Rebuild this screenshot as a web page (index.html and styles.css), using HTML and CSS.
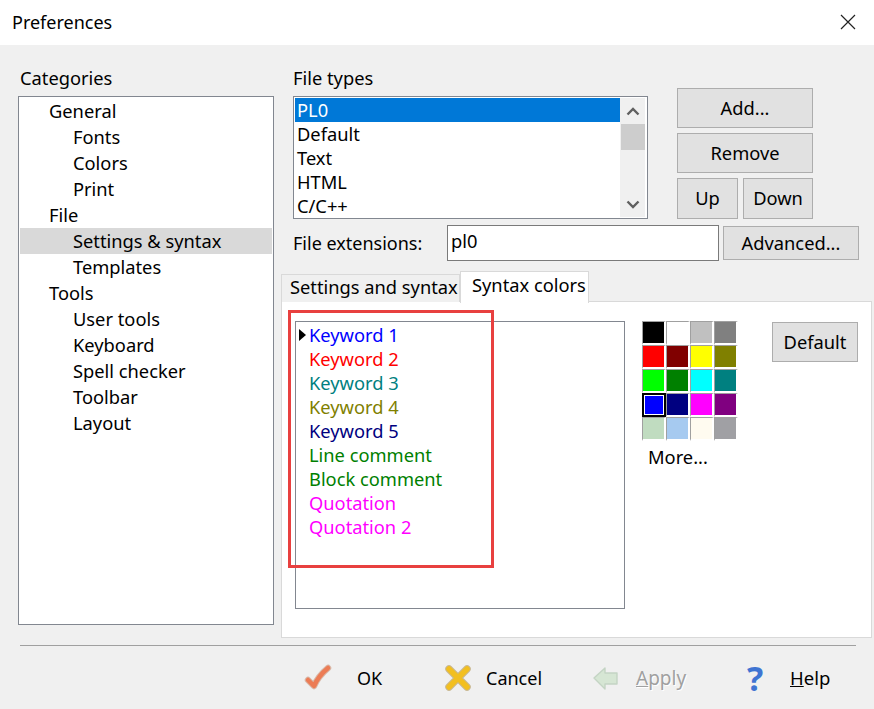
FILE: index.html
```html
<!DOCTYPE html>
<html lang="en">
<head>
    <meta charset="UTF-8">
    <meta name="viewport" content="width=device-width, initial-scale=1.0">
    <title>Preferences</title>
    <link rel="stylesheet" href="styles.css">
</head>
<body>
    <div class="titlebar">
        <span>Preferences</span>
        <svg class="close" width="16" height="16" viewBox="0 0 16 16"><path d="M1 1L15 15M15 1L1 15" stroke="#222" stroke-width="1.2" fill="none"/></svg>
    </div>
    <div class="main">
        <div class="categories">
            <div class="group-label">Categories</div>
            <ul class="tree">
                <li class="lvl1">General</li>
                <li class="lvl2">Fonts</li>
                <li class="lvl2">Colors</li>
                <li class="lvl2">Print</li>
                <li class="lvl1">File</li>
                <li class="lvl2 active">Settings &amp; syntax</li>
                <li class="lvl2">Templates</li>
                <li class="lvl1">Tools</li>
                <li class="lvl2">User tools</li>
                <li class="lvl2">Keyboard</li>
                <li class="lvl2">Spell checker</li>
                <li class="lvl2">Toolbar</li>
                <li class="lvl2">Layout</li>
            </ul>
        </div>
        <div class="settings">
            <div class="top">
                <div>
                    <div class="group-label types-label">File types</div>
                    <div class="filetypes">
                        <ul class="typelist">
                            <li class="selected">PL0</li>
                            <li>Default</li>
                            <li>Text</li>
                            <li>HTML</li>
                            <li>C/C++</li>
                        </ul>
                        <div class="scrollbar">
                            <svg width="14" height="10" viewBox="0 0 14 10"><path d="M1.5 8.5L7 3L12.5 8.5" stroke="#606060" stroke-width="2.4" fill="none"/></svg>
                            <div class="thumb"></div>
                            <svg class="down" width="14" height="10" viewBox="0 0 14 10"><path d="M1.5 1.5L7 7L12.5 1.5" stroke="#606060" stroke-width="2.4" fill="none"/></svg>
                        </div>
                    </div>
                </div>
                <div class="side-buttons">
                    <button class="btn tall">Add...</button>
                    <button class="btn tall">Remove</button>
                    <div class="updown">
                        <button class="btn up">Up</button>
                        <button class="btn down-btn">Down</button>
                    </div>
                </div>
            </div>
            <div class="extensions">
                <label class="ext-label">File extensions:</label>
                <div class="ext-input">pl0</div>
                <button class="btn advanced">Advanced...</button>
            </div>
            <div class="tabs">
                <div class="tab">Settings and syntax</div>
                <div class="tab current">Syntax colors</div>
            </div>
            <div class="panel">
                <ul class="syntax">
                    <li class="c-blue marked">Keyword 1</li>
                    <li class="c-red">Keyword 2</li>
                    <li class="c-teal">Keyword 3</li>
                    <li class="c-olive">Keyword 4</li>
                    <li class="c-navy">Keyword 5</li>
                    <li class="c-green">Line comment</li>
                    <li class="c-green">Block comment</li>
                    <li class="c-magenta">Quotation</li>
                    <li class="c-magenta">Quotation 2</li>
                </ul>
                <div class="palette">
                    <div class="swatches">
                        <i style="background:#000000"></i><i style="background:#ffffff"></i><i style="background:#c0c0c0"></i><i style="background:#808080"></i>
                        <i style="background:#ff0000"></i><i style="background:#800000"></i><i style="background:#ffff00"></i><i style="background:#808000"></i>
                        <i style="background:#00ff00"></i><i style="background:#008000"></i><i style="background:#00ffff"></i><i style="background:#008080"></i>
                        <i class="picked" style="background:#0000ff"></i><i style="background:#000080"></i><i style="background:#ff00ff"></i><i style="background:#800080"></i>
                        <i style="background:#c0dcc0"></i><i style="background:#a6caf0"></i><i style="background:#fffbf0"></i><i style="background:#a0a0a4"></i>
                    </div>
                    <div class="more">More...</div>
                </div>
                <button class="btn default-btn">Default</button>
            </div>
        </div>
    </div>
    <div class="footer">
        <div class="action">
            <svg class="icon" width="28" height="28" viewBox="0 0 28 28"><path d="M4 16L10 22C13 15 18 9 24 4" fill="none" stroke="#d9b8a8" stroke-width="6.5" stroke-linecap="round" stroke-linejoin="round"/><path d="M4 16L10 22C13 15 18 9 24 4" fill="none" stroke="#ec7c55" stroke-width="4.5" stroke-linecap="round" stroke-linejoin="round"/></svg>
            <span class="label ok-label">OK</span>
        </div>
        <div class="action">
            <svg class="icon" width="28" height="28" viewBox="0 0 28 28"><path d="M5 5L23 23M23 5L5 23" fill="none" stroke="#c9b890" stroke-width="7.5" stroke-linecap="round"/><path d="M5 5L23 23M23 5L5 23" fill="none" stroke="#f2bf20" stroke-width="5.5" stroke-linecap="round"/></svg>
            <span class="label cancel-label">Cancel</span>
        </div>
        <div class="action">
            <svg class="icon" width="28" height="28" viewBox="0 0 28 28"><path d="M2 14L13 4V9H25V20H13V25Z" fill="#d6e6d4" stroke="#c4d4c4" stroke-width="1.4" stroke-linejoin="round"/></svg>
            <span class="label apply-label"><u>A</u>pply</span>
        </div>
        <div class="action">
            <span class="help-mark">?</span>
            <span class="label help-label"><u>H</u>elp</span>
        </div>
    </div>
    <div class="annotation"></div>
</body>
</html>
```

FILE: styles.css
```css
* {
    box-sizing: border-box;
}

body {
    margin: 0;
    width: 874px;
    height: 709px;
    overflow: hidden;
    position: relative;
    background-color: #f0f0f0;
    font-family: "Noto Sans", "Liberation Sans", sans-serif;
    font-size: 18.3px;
    color: #000;
}

ul {
    list-style: none;
    margin: 0;
    padding: 0;
}

.titlebar {
    height: 45px;
    background-color: #fff;
    display: flex;
    align-items: center;
    justify-content: space-between;
    padding: 0 18px 2px 12px;
    font-size: 18px;
}

.main {
    display: flex;
    height: 600px;
    padding-left: 18px;
}

.categories {
    width: 256px;
    margin-right: 19px;
}

.group-label {
    height: 51px;
    line-height: 24px;
    padding: 21px 0 0 2px;
}

.types-label {
    padding-left: 0;
}

.tree {
    height: 529px;
    padding: 1px;
    background-color: #fff;
    border: 1px solid #828790;
}

.tree li {
    height: 26px;
    line-height: 26px;
}

.lvl1 {
    padding-left: 29px;
}

.lvl2 {
    padding-left: 53px;
}

.tree .active {
    background-color: #d9d9d9;
}

.top {
    display: flex;
    gap: 29px;
}

.filetypes {
    width: 355px;
    height: 123px;
    padding: 1px 2px 1px 1px;
    display: flex;
    background-color: #fff;
    border: 1px solid #828790;
}

.typelist {
    flex: 1;
}

.typelist li {
    height: 24px;
    line-height: 24px;
    padding-left: 2px;
}

.typelist .selected {
    background-color: #0078d7;
    color: #fff;
}

.scrollbar {
    width: 25px;
    background-color: #f0f0f0;
    display: flex;
    flex-direction: column;
    align-items: center;
    padding-top: 8px;
}

.thumb {
    width: 24px;
    height: 26px;
    margin-top: 8px;
    background-color: #cdcdcd;
}

.scrollbar .down {
    margin-top: auto;
    margin-bottom: 7px;
}

.side-buttons {
    width: 136px;
    padding-top: 43px;
    display: flex;
    flex-direction: column;
    gap: 5px;
}

.btn {
    font: inherit;
    color: #000;
    padding: 0 0 2px;
    background-color: #e1e1e1;
    border: 1px solid #adadad;
}

.tall {
    height: 40px;
}

.updown {
    display: flex;
    gap: 5px;
    height: 41px;
}

.up {
    width: 61px;
}

.down-btn {
    width: 70px;
}

.extensions {
    display: flex;
    align-items: center;
    height: 36px;
    margin-top: 6px;
}

.ext-label {
    width: 154px;
    font-size: 18px;
}

.ext-input {
    width: 272px;
    height: 36px;
    line-height: 30px;
    padding-left: 3px;
    background-color: #fff;
    border: 1px solid #7a7a7a;
}

.advanced {
    width: 136px;
    height: 34px;
    margin-left: 4px;
}

.tabs {
    display: flex;
    align-items: flex-end;
    height: 32px;
    margin: 9px 0 -1px -12px;
    position: relative;
}

.tab {
    width: 179px;
    height: 28px;
    line-height: 23px;
    padding-left: 8px;
    background-color: #f0f0f0;
    border: 1px solid #d9d9d9;
    border-bottom: none;
}

.tab.current {
    width: 129px;
    height: 32px;
    line-height: 26px;
    padding-left: 11px;
    background-color: #fff;
    margin-bottom: -1px;
}

.panel {
    width: 591px;
    height: 337px;
    margin-left: -12px;
    padding: 19px 0 0 13px;
    display: flex;
    align-items: flex-start;
    background-color: #fff;
    border: 1px solid #d9d9d9;
}

.syntax {
    width: 330px;
    height: 288px;
    padding: 1px 0 0 13px;
    border: 1px solid #828790;
}

.syntax li {
    height: 24px;
    line-height: 24px;
}

.marked {
    position: relative;
}

.marked::before {
    content: "";
    position: absolute;
    left: -10px;
    top: 6px;
    border-left: 7px solid #000;
    border-top: 6px solid transparent;
    border-bottom: 6px solid transparent;
}

.c-blue { color: #0000ff; }
.c-red { color: #ff0000; }
.c-teal { color: #008080; }
.c-olive { color: #808000; }
.c-navy { color: #000080; }
.c-green { color: #008000; }
.c-magenta { color: #ff00ff; }

.palette {
    width: 96px;
    margin-left: 17px;
}

.swatches {
    display: grid;
    grid-template-columns: repeat(4, 24px);
    grid-auto-rows: 24px;
}

.swatches i {
    display: block;
    border-style: solid;
    border-width: 1px 2px 2px 1px;
    border-color: #a0a0a0 #fff #fff #a0a0a0;
}

.swatches .picked {
    border: 2px solid #000;
    outline: 1px solid #fff;
    outline-offset: -3px;
}

.more {
    padding: 4px 0 0 6px;
    line-height: 24px;
}

.default-btn {
    width: 86px;
    height: 40px;
    margin: 1px 0 0 34px;
}

.footer {
    width: 836px;
    height: 64px;
    margin-left: 20px;
    padding-left: 284px;
    border-top: 1px solid #a0a0a0;
    display: grid;
    grid-template-columns: 140px 148px 152px auto;
    align-items: center;
    font-size: 18px;
}

.action {
    display: flex;
    align-items: center;
}

.icon {
    flex: none;
}

.label {
    line-height: 24px;
}

.ok-label {
    margin-left: 25px;
}

.cancel-label {
    margin-left: 14px;
}

.apply-label {
    margin-left: 16px;
    font-size: 19px;
    color: #a0a0a0;
    text-shadow: 1px 1px 0 #fff;
}

.help-mark {
    width: 22px;
    font-size: 34px;
    font-weight: bold;
    line-height: 32px;
    color: #3f74d2;
    text-align: center;
}

.help-label {
    margin-left: 24px;
    font-size: 18.5px;
}

/* red box drawn over the list in the screenshot */
.annotation {
    position: absolute;
    left: 288px;
    top: 310px;
    width: 206px;
    height: 258px;
    border: 3px solid #e8403f;
}
```
